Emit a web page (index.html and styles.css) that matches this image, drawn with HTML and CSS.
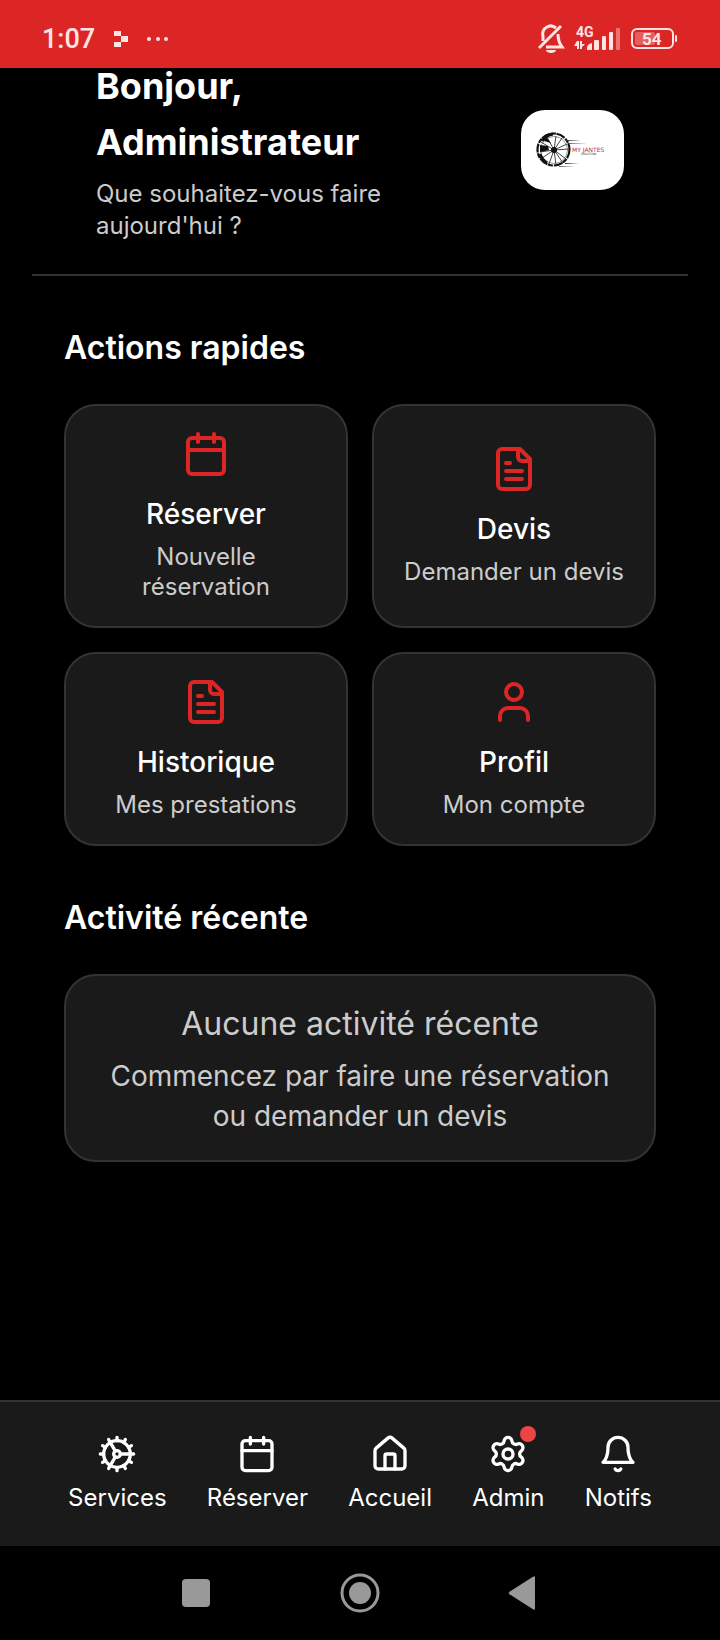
FILE: index.html
```html
<!DOCTYPE html>
<html lang="fr">
<head>
<meta charset="utf-8">
<meta name="viewport" content="width=device-width, initial-scale=1">
<title>Accueil</title>
<link rel="stylesheet" href="styles.css">
</head>
<body>
<svg class="sprite" aria-hidden="true">
  <symbol id="calendar" viewBox="0 0 24 24"><path d="M8 2v4M16 2v4M3 10h18"/><rect x="3" y="4" width="18" height="18" rx="2"/></symbol>
  <symbol id="file-text" viewBox="0 0 24 24"><path d="M15 2H6a2 2 0 0 0-2 2v16a2 2 0 0 0 2 2h12a2 2 0 0 0 2-2V7Z"/><path d="M14 2v4a2 2 0 0 0 2 2h4M10 9H8M16 13H8M16 17H8"/></symbol>
  <symbol id="user" viewBox="0 0 24 24"><path d="M19 21v-2a4 4 0 0 0-4-4H9a4 4 0 0 0-4 4v2"/><circle cx="12" cy="7" r="4"/></symbol>
  <symbol id="cog" viewBox="0 0 24 24"><circle cx="12" cy="12" r="8"/><circle cx="12" cy="12" r="2"/><path d="M12 2v2M12 22v-2M17 20.66l-1-1.73M11 10.27 7 3.34M20.66 17l-1.73-1M3.34 7l1.73 1M14 12h8M2 12h2M20.66 7l-1.73 1M3.34 17l1.73-1M17 3.34l-1 1.73M11 13.73l-4 6.93"/></symbol>
  <symbol id="house" viewBox="0 0 24 24"><path d="M15 21v-8a1 1 0 0 0-1-1h-4a1 1 0 0 0-1 1v8"/><path d="M3 10a2 2 0 0 1 .709-1.528l7-5.999a2 2 0 0 1 2.582 0l7 5.999A2 2 0 0 1 21 10v9a2 2 0 0 1-2 2H5a2 2 0 0 1-2-2z"/></symbol>
  <symbol id="settings" viewBox="0 0 24 24"><path d="M9.671 4.136a2.34 2.34 0 0 1 4.659 0 2.34 2.34 0 0 0 3.319 1.915 2.34 2.34 0 0 1 2.33 4.033 2.34 2.34 0 0 0 0 3.831 2.34 2.34 0 0 1-2.33 4.033 2.34 2.34 0 0 0-3.319 1.915 2.34 2.34 0 0 1-4.659 0 2.34 2.34 0 0 0-3.32-1.915 2.34 2.34 0 0 1-2.33-4.033 2.34 2.34 0 0 0 0-3.831A2.34 2.34 0 0 1 6.35 6.051a2.34 2.34 0 0 0 3.319-1.915"/><circle cx="12" cy="12" r="3"/></symbol>
  <symbol id="bell" viewBox="0 0 24 24"><path d="M6 8a6 6 0 0 1 12 0c0 7 3 9 3 9H3s3-2 3-9"/><path d="M10.3 21a1.94 1.94 0 0 0 3.4 0"/></symbol>
</svg>
<div class="screen">
  <div class="status">
    <div class="status-side">
      <span class="clock">1:07</span>
      <svg width="14" height="16" viewBox="0 0 14 16"><path d="M0 0h7v5H0zM7 5h7v6H7zM0 11h7v5H0z"/></svg>
      <svg width="22" height="4" viewBox="0 0 22 4"><circle cx="2" cy="2" r="2"/><circle cx="11" cy="2" r="2"/><circle cx="19" cy="2" r="2"/></svg>
    </div>
    <div class="status-side status-right">
      <svg width="28" height="30" viewBox="0 0 28 30"><g class="line"><path d="M5 17v-5a8 8 0 0 1 13-8M20 10c0 6 1 9 4 13H8M1 24 23 2"/></g><path d="M8 26h10a5 3 0 0 1-10 0z"/></svg>
      <svg width="48" height="34" viewBox="0 -4 48 34"><text class="network" x="2" y="11">4G</text><path d="M3 15h2v8H3v-3H0zM6 15h2v3h3L8 21v2H6z"/><path d="M13 24v-2q0-4 5-5v7z"/><rect x="20" y="14" width="5" height="10" rx="1"/><rect x="28" y="10" width="4" height="14" rx="1"/><rect x="35" y="6" width="4" height="18" rx="1"/><rect x="42" y="2" width="4" height="22" rx="1" opacity=".4"/></svg>
      <svg width="48" height="24" viewBox="0 0 48 24"><rect x="5" y="5" width="20" height="13" rx="2" opacity=".3"/><rect class="line thin" x="2" y="2" width="41" height="19" rx="5"/><rect x="45" y="8" width="2" height="7" rx="1"/><text class="charge" x="12" y="18">54</text></svg>
    </div>
  </div>

  <header class="hero">
    <div class="hero-text">
      <h1>Bonjour, Administrateur</h1>
      <p>Que souhaitez-vous faire aujourd'hui ?</p>
    </div>
    <svg class="logo" width="103" height="80" viewBox="0 0 103 80" role="img" aria-label="My Jantes Solution">
      <g fill="none" stroke="#111">
        <circle cx="32.500" cy="39.500" r="16" stroke-width="2.200" stroke-dasharray="9 1 5 .6"/>
        <circle cx="33" cy="40" r="13.500" stroke-width="1" stroke="#999"/>
        <path d="M33 40 35 26M33 40 41 28M33 40 46 34M33 40 48 39M33 40 45 49M33 40 42 53M33 40 35 55M33 40 28 54M33 40 21 48M33 40 19 42M33 40 20 32M33 40 26 27" stroke="#444"/>
        <path d="M21 31q4-6 11-7M19 44q2 6 7 9" stroke-width="3"/>
      </g>
      <circle cx="33" cy="40" r="3" fill="#111"/>
      <path d="M19 35l8 1 1 4-9 2zM25 27l5 6-7-2z" fill="#111"/>
      <path d="M45 30l15 .5-15 .5zM47 33l19 .2-19 .5zM44 53l14 .5-14 .5zM38 56l16 .3-16 .5z" fill="#333"/>
      <text class="logo-name" x="51" y="42">MY JANTES</text>
      <text class="logo-sub" x="60" y="45">SOLUTION</text>
    </svg>
  </header>

  <main class="content">
    <section>
      <h2>Actions rapides</h2>
      <div class="grid">
        <button class="card action"><svg class="icon"><use href="#calendar"/></svg><span class="action-title">Réserver</span><span class="action-sub">Nouvelle réservation</span></button>
        <button class="card action"><svg class="icon"><use href="#file-text"/></svg><span class="action-title">Devis</span><span class="action-sub">Demander un devis</span></button>
        <button class="card action"><svg class="icon"><use href="#file-text"/></svg><span class="action-title">Historique</span><span class="action-sub">Mes prestations</span></button>
        <button class="card action"><svg class="icon"><use href="#user"/></svg><span class="action-title">Profil</span><span class="action-sub">Mon compte</span></button>
      </div>
    </section>
    <section>
      <h2>Activité récente</h2>
      <div class="card empty">
        <p class="empty-title">Aucune activité récente</p>
        <p class="empty-sub">Commencez par faire une réservation ou demander un devis</p>
      </div>
    </section>
  </main>

  <nav class="tabs">
    <a class="tab" href="#services"><svg class="icon"><use href="#cog"/></svg>Services</a>
    <a class="tab" href="#reserver"><svg class="icon"><use href="#calendar"/></svg>Réserver</a>
    <a class="tab" href="#accueil"><svg class="icon"><use href="#house"/></svg>Accueil</a>
    <a class="tab" href="#admin"><span class="tab-icon"><svg class="icon"><use href="#settings"/></svg><i class="dot"></i></span>Admin</a>
    <a class="tab" href="#notifs"><svg class="icon"><use href="#bell"/></svg>Notifs</a>
  </nav>

  <div class="system">
    <button aria-label="Applications récentes"><svg width="40" height="40" viewBox="0 0 40 40"><rect x="6" y="6" width="28" height="28" rx="4"/></svg></button>
    <button aria-label="Écran d'accueil"><svg width="40" height="40" viewBox="0 0 40 40"><circle cx="20" cy="20" r="18" fill="none" stroke="#999" stroke-width="3"/><circle cx="20" cy="20" r="11"/></svg></button>
    <button aria-label="Retour"><svg width="40" height="40" viewBox="0 0 40 40"><path d="M31 4.500v31q0 2-2 .8L5.500 21.200q-1.500-1.200 0-2.400L29 3.700q2-1.200 2 .8z"/></svg></button>
  </div>
</div>
</body>
</html>
```

FILE: styles.css
```css
* {
  box-sizing: border-box;
}

body,
h1,
h2,
p {
  margin: 0;
}

body {
  background: #000;
  color: #fff;
  font-family: Inter, "Liberation Sans", sans-serif;
}

button {
  border: 0;
  background: none;
  color: inherit;
  font: inherit;
}

svg {
  display: block;
  flex: none;
}

.sprite {
  position: absolute;
  width: 0;
  height: 0;
}

.screen {
  display: flex;
  flex-direction: column;
  min-height: 100vh;
}

.status {
  display: flex;
  justify-content: space-between;
  align-items: center;
  height: 68px;
  padding: 10px 42px 0;
  background: #dc2626;
  color: #ffe4e4;
  font-family: Roboto, sans-serif;
  z-index: 1;
}

.status svg {
  fill: #ffe4e4;
}

.status .line {
  fill: none;
  stroke: #ffe4e4;
  stroke-width: 3;
}

.status .thin {
  stroke-width: 2;
}

.status-side {
  display: flex;
  align-items: center;
  gap: 19px;
}

.status-right {
  gap: 8px;
}

.clock {
  font-size: 27px;
  font-weight: 500;
  line-height: 32px;
}

.network {
  font-size: 14px;
  font-weight: 700;
}

.charge {
  font-size: 17px;
  font-weight: 700;
}

.hero {
  display: flex;
  justify-content: space-between;
  align-items: center;
  gap: 32px;
  margin: -10px 32px 0;
  padding: 0 64px 32px;
  border-bottom: 2px solid #333;
}

.hero h1 {
  font-size: 36px;
  font-weight: 700;
  line-height: 56px;
}

.hero p {
  margin-top: 8px;
  color: #ccc;
  font-size: 24px;
  line-height: 32px;
}

.logo {
  border-radius: 24px;
  background: #fff;
}

.logo-name {
  fill: #c2272d;
  font-family: "DejaVu Sans", sans-serif;
  font-size: 6px;
}

.logo-sub {
  fill: #333;
  font-family: "DejaVu Sans", sans-serif;
  font-size: 3px;
}

.content {
  flex: 1;
  padding: 0 64px 48px;
}

h2 {
  padding: 48px 0 32px;
  font-size: 32px;
  font-weight: 600;
  line-height: 48px;
}

.grid {
  display: grid;
  grid-template-columns: 1fr 1fr;
  gap: 24px;
}

.card {
  padding: 24px;
  border: 2px solid #333;
  border-radius: 32px;
  background: #1a1a1a;
  text-align: center;
}

.icon {
  width: 40px;
  height: 40px;
  fill: none;
  stroke: currentColor;
  stroke-width: 2;
  stroke-linecap: round;
  stroke-linejoin: round;
}

.action {
  display: flex;
  flex-direction: column;
  align-items: center;
  justify-content: center;
}

.action .icon {
  width: 48px;
  height: 48px;
  color: #dc2626;
}

.action-title {
  margin: 16px 0 8px;
  font-size: 28px;
  font-weight: 500;
  line-height: 40px;
}

.action-sub {
  color: #ccc;
  font-size: 24px;
  line-height: 30px;
}

.empty {
  color: #ccc;
}

.empty-title {
  font-size: 32px;
  line-height: 48px;
}

.empty-sub {
  margin-top: 8px;
  font-size: 28px;
  line-height: 40px;
}

.tabs {
  display: flex;
  justify-content: space-around;
  padding: 32px 48px;
  border-top: 2px solid #333;
  background: #1a1a1a;
}

.tab {
  display: flex;
  flex-direction: column;
  align-items: center;
  gap: 8px;
  color: #fff;
  font-size: 24px;
  line-height: 32px;
  text-decoration: none;
}

.tab-icon {
  position: relative;
}

.dot {
  position: absolute;
  top: -8px;
  right: -8px;
  width: 16px;
  height: 16px;
  border-radius: 50%;
  background: #ef4444;
}

.system {
  display: flex;
  justify-content: space-around;
  align-items: center;
  height: 94px;
  padding: 0 114px;
}

.system button {
  padding: 0;
}

.system svg {
  fill: #999;
}
```
